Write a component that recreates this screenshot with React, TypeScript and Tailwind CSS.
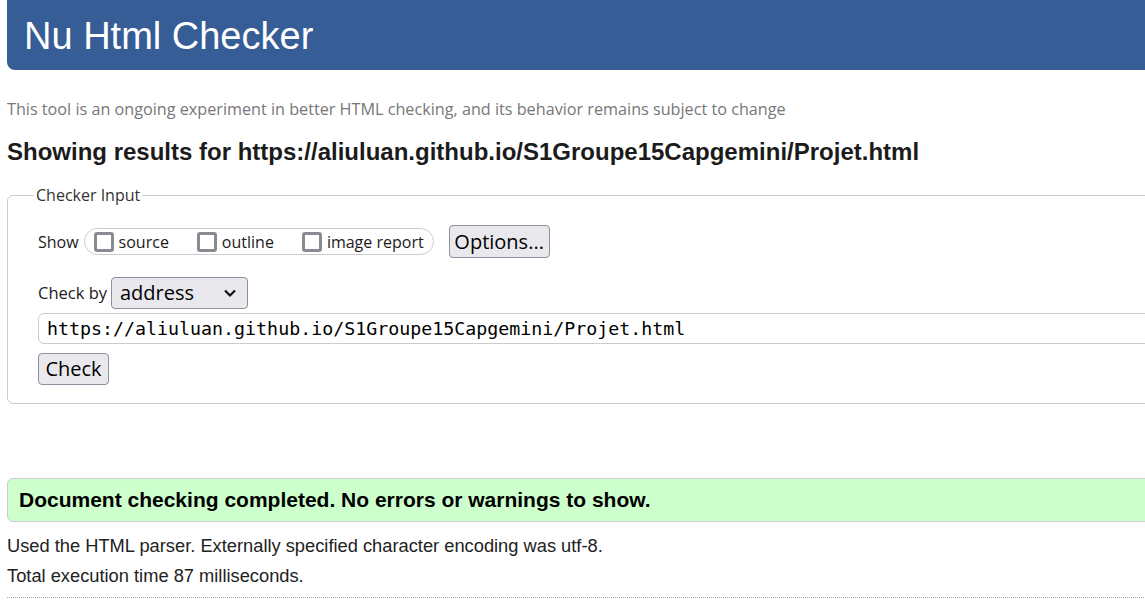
import React from "react";

const SEGOE = "font-['Open_Sans',sans-serif]";
const ARIAL = "font-['Liberation_Sans',Arial,sans-serif]";

function Box({ label }: { label: string }) {
  return (
    <label className="flex items-center gap-[5px]">
      <span className="w-[20px] h-[20px] rounded-[3px] border-[3px] border-[#8b8a93] bg-white" />
      <span>{label}</span>
    </label>
  );
}

export default function App() {
  return (
    <div className="w-[1145px] h-[616px] overflow-hidden bg-white text-[#1b1b1b]">
      <div className="w-[1200px] pl-[7px]">
        <div className="h-[70px] bg-[#365d96] rounded-bl-[8px] flex items-center pl-[17px] pt-[1px]">
          <h1 className={`${ARIAL} text-white text-[38px] leading-none`}>Nu Html Checker</h1>
        </div>

        <p className={`${SEGOE} text-[#777] text-[16.2px] mt-[28px] leading-[22px]`}>
          This tool is an ongoing experiment in better HTML checking, and its behavior remains subject to change
        </p>

        <h2 className={`${ARIAL} font-bold text-[24px] mt-[18px] leading-[28px] text-[#1b1b1b]`}>
          Showing results for https://aliuluan.github.io/S1Groupe15Capgemini/Projet.html
        </h2>

        <fieldset className={`${SEGOE} mt-[17px] border border-[#cccccc] rounded-[6px] pl-[30px] pb-[18px] h-[221px]`}>
          <legend className="px-[2px] ml-[-4px] text-[16px] text-[#333]">Checker Input</legend>

          <div className="flex items-center mt-[18px] text-[16px]">
            <span className="mr-[5px]">Show</span>
            <div className="flex items-center gap-[28px] border border-[#cccccc] rounded-full h-[27px] pl-[9px] pr-[9px]">
              <Box label="source" />
              <Box label="outline" />
              <Box label="image report" />
            </div>
            <button className="ml-[15px] h-[33px] w-[101px] bg-[#e9e9ed] border border-[#8f8f9d] rounded-[4px] text-[20px] text-black">
              Options...
            </button>
          </div>

          <div className="flex items-center mt-[19px] text-[16.5px]">
            <span className="mr-[4px]">Check by</span>
            <div className="w-[137px] h-[32px] bg-[#e9e9ed] border border-[#8f8f9d] rounded-[4px] flex items-center justify-between pl-[8px] pr-[10px] text-[20px] text-black">
              <span>address</span>
              <svg width="14" height="10" viewBox="0 0 14 10">
                <path d="M2 2.5 L7 7.5 L12 2.5" fill="none" stroke="#111" strokeWidth="2.2" />
              </svg>
            </div>
          </div>

          <div className="mt-[4px] h-[31px] border border-[#cccccc] rounded-l-[6px] flex items-center pl-[8px] font-['DejaVu_Sans_Mono',monospace] text-[18.3px] text-black">
            https://aliuluan.github.io/S1Groupe15Capgemini/Projet.html
          </div>

          <button className="mt-[9px] h-[32px] w-[71px] bg-[#e9e9ed] border border-[#8f8f9d] rounded-[4px] text-[20px] text-black">
            Check
          </button>
        </fieldset>

        <div className={`${ARIAL} mt-[74px] h-[44px] bg-[#ccffcc] border border-[#cccccc] rounded-l-[6px] flex items-center pl-[11px] font-bold text-[21px] text-black`}>
          Document checking completed. No errors or warnings to show.
        </div>

        <p className={`${ARIAL} text-[18.3px] mt-[13px] leading-[22px] text-[#222]`}>
          Used the HTML parser. Externally specified character encoding was utf-8.
        </p>
        <p className={`${ARIAL} text-[18.3px] mt-[8px] leading-[22px] text-[#222]`}>
          Total execution time 87 milliseconds.
        </p>
        <div className="mt-[10px] border-t border-dotted border-[#aaa]" />
      </div>
    </div>
  );
}
